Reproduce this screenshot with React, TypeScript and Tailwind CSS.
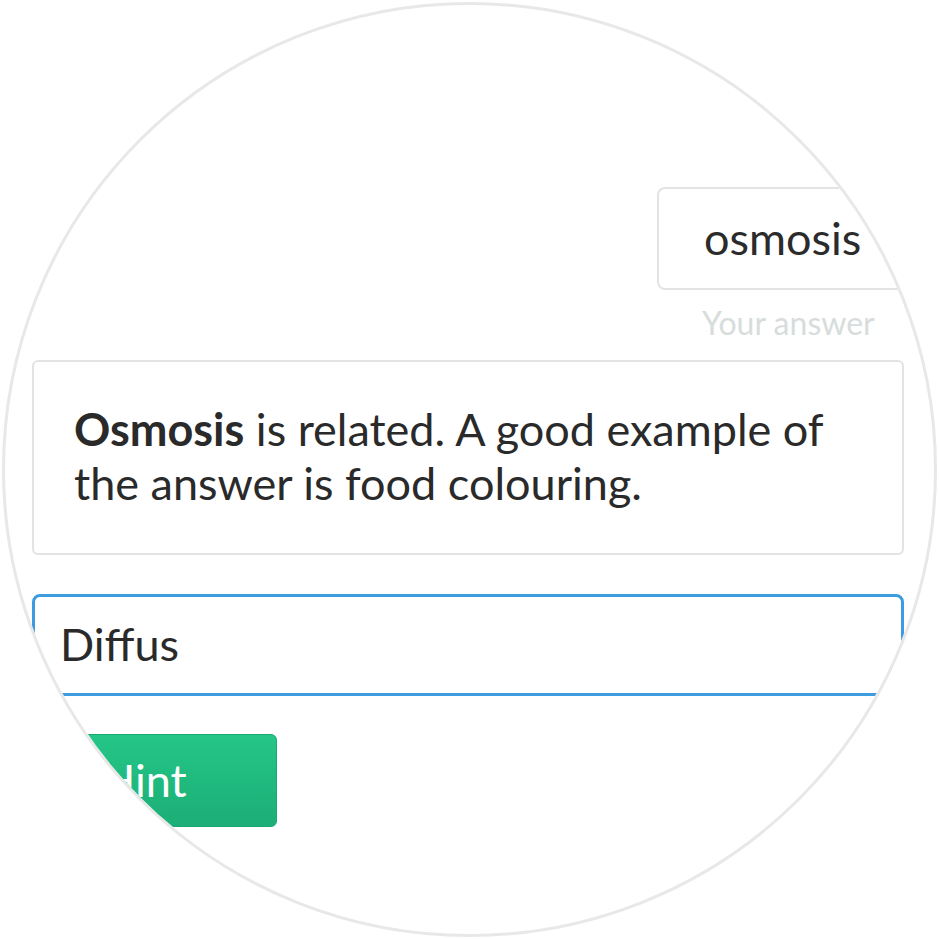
export default function App() {
  return (
    <div className="w-[939px] h-[939px] bg-white p-[2px] font-['Lato','Liberation_Sans',sans-serif]">
      <div className="w-[935px] h-[935px] rounded-full border-[3px] border-[#e8e8e8] overflow-hidden bg-white">
        <div className="flex flex-col pt-[182px] pl-[27px] pr-[30px]">
          {/* answer given */}
          <div className="flex pl-[625px]">
            <div className="shrink-0 w-[300px] h-[103px] flex items-center pl-[45px] border-2 border-[#e3e3e3] rounded-lg text-[45px] text-[#2b2b2b]">
              osmosis
            </div>
          </div>
          <div className="mt-[14px] pl-[670px] text-[32px] leading-[38px] whitespace-nowrap text-[#d7dddc]">
            Your answer
          </div>

          {/* feedback */}
          <div className="mt-[18px] h-[195px] border-2 border-[#e3e3e3] rounded-md pl-[40px] pr-[20px] pt-[40px] text-[45px] leading-[54px] text-[#2a2a2a] whitespace-nowrap">
            <b className="font-bold">Osmosis</b> is related. A good example of
            <br />
            the answer is food colouring.
          </div>

          {/* input */}
          <div className="mt-[39px] h-[102px] flex items-center border-[3px] border-[#3d9be0] rounded-lg pl-[25px] text-[45px] text-[#2a2a2a]">
            Diffus
          </div>

          {/* hint button */}
          <div className="mt-[38px]">
            <button className="w-[245px] h-[93px] flex items-center pl-[68px] rounded-md border border-[#1ca971] bg-gradient-to-b from-[#24c687] to-[#1cae76] text-[45px] text-white">
              Hint
            </button>
          </div>
        </div>
      </div>
    </div>
  );
}
